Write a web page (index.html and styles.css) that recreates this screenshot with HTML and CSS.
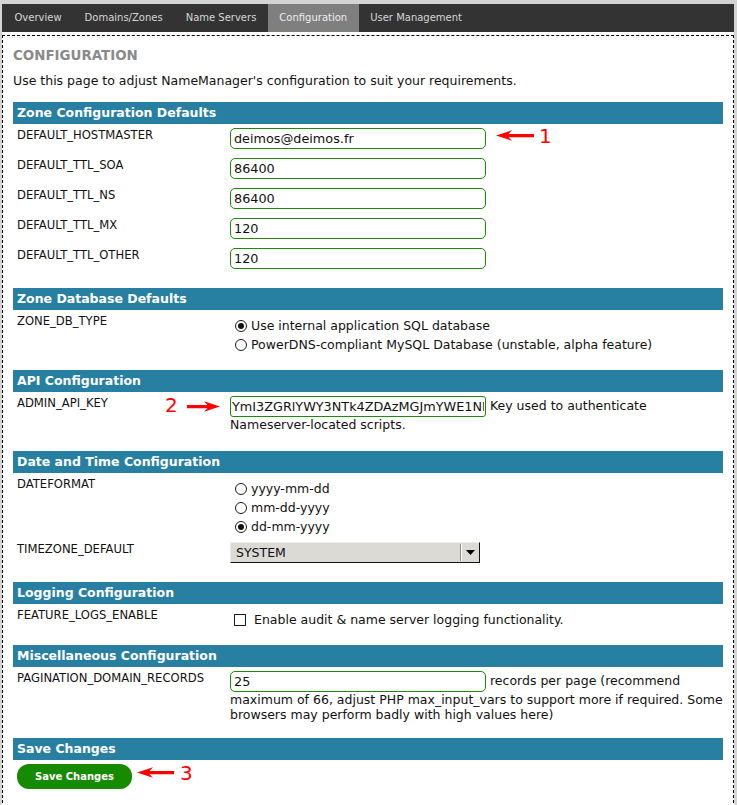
FILE: index.html
```html
<!DOCTYPE html>
<html lang="en">
<head>
<meta charset="utf-8">
<title>Configuration</title>
<link rel="stylesheet" href="styles.css">
</head>
<body>
<div class="page">
  <nav class="tabs">
    <a class="tab" href="#">Overview</a>
    <a class="tab" href="#">Domains/Zones</a>
    <a class="tab" href="#">Name Servers</a>
    <a class="tab active" href="#">Configuration</a>
    <a class="tab" href="#">User Management</a>
  </nav>
  <div class="sheet">
    <div class="panel">
      <h2 class="title">CONFIGURATION</h2>
      <p class="intro">Use this page to adjust NameManager's configuration to suit your requirements.</p>

      <section class="group">
        <h3 class="group-head">Zone Configuration Defaults</h3>
        <div class="row"><div class="key">DEFAULT_HOSTMASTER</div><div class="val"><input class="field" type="text" value="deimos@deimos.fr"></div></div>
        <div class="row"><div class="key">DEFAULT_TTL_SOA</div><div class="val"><input class="field" type="text" value="86400"></div></div>
        <div class="row"><div class="key">DEFAULT_TTL_NS</div><div class="val"><input class="field" type="text" value="86400"></div></div>
        <div class="row"><div class="key">DEFAULT_TTL_MX</div><div class="val"><input class="field" type="text" value="120"></div></div>
        <div class="row"><div class="key">DEFAULT_TTL_OTHER</div><div class="val"><input class="field" type="text" value="120"></div></div>
      </section>

      <section class="group">
        <h3 class="group-head">Zone Database Defaults</h3>
        <div class="row row-choices"><div class="key">ZONE_DB_TYPE</div>
          <div class="val choices">
            <div class="choice"><span class="radio on"></span>Use internal application SQL database</div>
            <div class="choice"><span class="radio"></span>PowerDNS-compliant MySQL Database (unstable, alpha feature)</div>
          </div>
        </div>
      </section>

      <section class="group">
        <h3 class="group-head">API Configuration</h3>
        <div class="row"><div class="key">ADMIN_API_KEY</div><div class="val text"><input class="field inline api" type="text" value="YmI3ZGRlYWY3NTk4ZDAzMGJmYWE1NDk3ZTM0NmJh"> Key used to authenticate Nameserver-located scripts.</div></div>
      </section>

      <section class="group">
        <h3 class="group-head">Date and Time Configuration</h3>
        <div class="row row-choices"><div class="key">DATEFORMAT</div>
          <div class="val choices">
            <div class="choice"><span class="radio"></span>yyyy-mm-dd</div>
            <div class="choice"><span class="radio"></span>mm-dd-yyyy</div>
            <div class="choice"><span class="radio on"></span>dd-mm-yyyy</div>
          </div>
        </div>
        <div class="row"><div class="key">TIMEZONE_DEFAULT</div>
          <div class="val">
            <div class="select"><span class="select-text">SYSTEM</span><span class="select-arrow"><svg width="9" height="5" viewBox="0 0 9 5"><path d="M0 0H9L4.5 5Z" fill="#000"/></svg></span></div>
          </div>
        </div>
      </section>

      <section class="group">
        <h3 class="group-head">Logging Configuration</h3>
        <div class="row row-choices"><div class="key">FEATURE_LOGS_ENABLE</div>
          <div class="val choices">
            <div class="choice check-choice"><span class="check"></span>Enable audit &amp; name server logging functionality.</div>
          </div>
        </div>
      </section>

      <section class="group">
        <h3 class="group-head">Miscellaneous Configuration</h3>
        <div class="row row-tight"><div class="key">PAGINATION_DOMAIN_RECORDS</div><div class="val text"><input class="field inline" type="text" value="25"> records per page (recommend maximum of 66, adjust PHP max_input_vars to support more if required. Some browsers may perform badly with high values here)</div></div>
      </section>

      <section class="group">
        <h3 class="group-head">Save Changes</h3>
        <div class="save-row"><button class="save" type="button">Save Changes</button></div>
      </section>
    </div>
  </div>
</div>

<svg class="ann arrow-1" width="38" height="11" viewBox="0 0 38 11"><path d="M0 5.5L16 0.3L12.5 4H38V7.2H12.5L16 10.7Z" fill="#f00"/></svg>
<span class="ann num num-1">1</span>
<span class="ann num num-2">2</span>
<svg class="ann arrow-2" width="33" height="11" viewBox="0 0 33 11"><path d="M33 5.5L17 0.3L20.5 4H0V7.2H20.5L17 10.7Z" fill="#f00"/></svg>
<svg class="ann arrow-3" width="37" height="11" viewBox="0 0 37 11"><path d="M0 5.5L16 0.3L12.5 4H37V7.2H12.5L16 10.7Z" fill="#f00"/></svg>
<span class="ann num num-3">3</span>
</body>
</html>
```

FILE: styles.css
```css
html, body {
  margin: 0;
  background: #d4d4d4;
}
body {
  font-family: "DejaVu Sans", Verdana, sans-serif;
  color: #111;
}
.page {
  margin: 4px 0 0 2px;
  width: 732px;
}
.tabs {
  display: flex;
  height: 28px;
  background: #333333;
  padding-left: 1px;
}
.tab {
  padding: 0 11.5px;
  line-height: 28px;
  font-size: 10px;
  color: #d6d6d6;
  text-decoration: none;
  white-space: nowrap;
}
.tab.active {
  background: #7f7f7f;
  color: #ededed;
}
.sheet {
  background: #fff;
  padding-top: 3px;
}
.panel {
  border: 1px dashed #000;
  padding: 12px 10px 40px;
}
.title {
  margin: 0;
  font-size: 13.4px;
  font-weight: bold;
  color: #8a8a8a;
}
.intro {
  margin: 10px 0 14px;
  font-size: 12.5px;
}
.group {
  margin-bottom: 14px;
}
.group-head {
  margin: 0;
  height: 22px;
  line-height: 22px;
  padding-left: 4px;
  background: #2780a1;
  color: #fff;
  font-size: 12.5px;
  font-weight: bold;
}
.row {
  display: grid;
  grid-template-columns: 217px 1fr;
  padding: 4px 0 5px;
}
.row-choices {
  padding-bottom: 2px;
}
.row-tight {
  padding-bottom: 2px;
}
.key {
  padding-left: 4px;
  font-size: 11.6px;
}
.val {
  font-size: 12.5px;
}
.text {
  line-height: 15px;
}
.field {
  display: block;
  box-sizing: border-box;
  width: 256px;
  height: 21px;
  margin: 0;
  padding: 0 3px;
  border: 1px solid #1d8a0c;
  border-radius: 5px;
  background: #fff;
  color: #111;
  font: 12.8px "DejaVu Sans", Verdana, sans-serif;
  outline: none;
}
.field.inline {
  display: inline-block;
  vertical-align: middle;
}
.field.api {
  padding: 0 1px;
  border-radius: 3px;
}
.choices {
  padding-top: 2px;
}
.choice {
  display: flex;
  align-items: center;
  height: 19px;
  padding-left: 5px;
  white-space: nowrap;
}
.radio {
  flex: none;
  box-sizing: border-box;
  width: 12px;
  height: 12px;
  margin-right: 4px;
  border: 1px solid #1a1a1a;
  border-radius: 50%;
  display: flex;
  align-items: center;
  justify-content: center;
}
.radio.on::after {
  content: "";
  width: 6px;
  height: 6px;
  border-radius: 50%;
  background: #111;
}
.check-choice {
  padding-left: 4px;
}
.check {
  flex: none;
  box-sizing: border-box;
  width: 12px;
  height: 12px;
  margin-right: 8px;
  border: 1px solid #1a1a1a;
}
.select {
  display: flex;
  align-items: center;
  box-sizing: border-box;
  width: 250px;
  height: 21px;
  background: #dcdad5;
  border: 1px solid;
  border-color: #eeece8 #111 #111 #eeece8;
}
.select-text {
  flex: 1;
  padding-left: 5px;
  font-size: 12.5px;
}
.select-arrow {
  box-sizing: border-box;
  width: 19px;
  height: 17px;
  border-left: 1px solid #8e8c86;
  box-shadow: inset 1px 0 #fff;
  display: flex;
  align-items: center;
  justify-content: center;
}
.save-row {
  padding: 4px 4px;
}
.save {
  display: block;
  width: 115px;
  height: 25px;
  border: none;
  border-radius: 12px;
  background: #168a00;
  color: #fff;
  font: bold 10px "DejaVu Sans", Verdana, sans-serif;
  padding: 0;
}
.ann {
  position: absolute;
}
.num {
  color: #f00;
  font: 20px/1 "DejaVu Sans", sans-serif;
}
.arrow-1 { left: 496px; top: 130px; }
.num-1 { left: 539px; top: 126px; }
.num-2 { left: 165px; top: 395px; }
.arrow-2 { left: 187px; top: 401px; }
.arrow-3 { left: 137px; top: 767px; }
.num-3 { left: 180px; top: 763px; }
```
